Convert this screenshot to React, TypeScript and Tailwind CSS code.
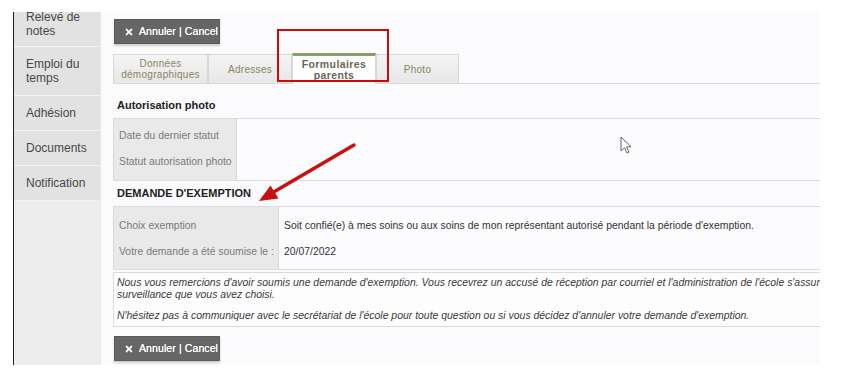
import React from "react";
import { FaTimes } from "react-icons/fa";

const menu = [
  { label: ["Relevé de", "notes"], first: true },
  { label: ["Emploi du", "temps"] },
  { label: ["Adhésion"] },
  { label: ["Documents"] },
  { label: ["Notification"] },
];

const tabs = [
  { label: ["Données", "démographiques"], w: "w-[95px]" },
  { label: ["Adresses"], w: "w-[84px]" },
  { label: ["Formulaires", "parents"], w: "w-[84px]", active: true },
  { label: ["Photo"], w: "w-[83px]" },
];

function CancelButton() {
  return (
    <button className="flex h-[25px] w-[106px] items-center gap-[5px] border border-[#5a5a5a] bg-[#666666] pl-[9px] text-[10.5px] font-bold text-white shadow-[0_2px_2px_rgba(0,0,0,0.18)]">
      <FaTimes className="h-[10px] w-[10px]" />
      <span className="font-normal tracking-[0.1px] [text-shadow:0_0_0.4px_#fff]">Annuler | Cancel</span>
    </button>
  );
}

function InfoTable({ labelWidth, rows, padTop, padBottom }: {
  labelWidth: string;
  rows: { label: string; value?: string }[];
  padTop: string;
  padBottom: string;
}) {
  return (
    <div className="flex w-[1000px] border-y border-[#dcdcdc]">
      <div className={`${labelWidth} shrink-0 border-x border-[#d8d8d8] bg-[#e9e9e9] ${padTop} ${padBottom}`}>
        {rows.map((r) => (
          <div key={r.label} className="flex h-[26px] items-center whitespace-nowrap pl-[5px] text-[10.4px] text-[#7a7a7a]">
            {r.label}
          </div>
        ))}
      </div>
      <div className={`flex-1 bg-[#fcfbfd] ${padTop} ${padBottom}`}>
        {rows.map((r) => (
          <div key={r.label} className="flex h-[26px] items-center whitespace-nowrap pl-[5px] text-[10.4px] text-[#333]">
            {r.value ?? ""}
          </div>
        ))}
      </div>
    </div>
  );
}

export default function App() {
  return (
    <div className="relative h-[371px] w-[855px] overflow-hidden bg-white font-['Liberation_Sans',Arial,sans-serif]">
      <div className="mt-3 flex h-[353px] w-[820px] overflow-hidden">
        {/* sidebar */}
        <aside className="ml-[13px] flex w-[87px] shrink-0 flex-col overflow-hidden border-l border-[#1e1e1e] bg-[#ededed]">
          {menu.map((m) => (
            <div
              key={m.label[0]}
              className={`border-b border-[#f3f3f3] bg-[#e2e2e2] pl-3 text-[12px] leading-[14px] text-[#474747] ${
                m.first ? "-mt-[12px] pt-[10px] pb-[8px]" : "py-[10px]"
              }`}
            >
              {m.label.map((l) => (
                <div key={l}>{l}</div>
              ))}
            </div>
          ))}
        </aside>

        {/* main */}
        <main className="flex-1 overflow-hidden border-l border-[#e6e6e6] bg-[#fbfafc] pl-[12px]">
          <div className="pt-[7px] pl-px">
            <CancelButton />
          </div>

          {/* tabs */}
          <div className="mt-[10px] flex h-[30px] w-[1000px] items-end border-b border-[#dadada]">
            {tabs.map((t) =>
              t.active ? (
                <div
                  key={t.label[0]}
                  className={`${t.w} relative -mb-px flex h-[31px] flex-col items-center border-t-[3px] border-x border-[#d8d8d8] border-t-[#86a069] bg-white pt-[3px] text-[10.5px] font-bold leading-[11px] tracking-[0.4px] text-[#6b6650]`}
                >
                  {t.label.map((l) => (
                    <span key={l}>{l}</span>
                  ))}
                </div>
              ) : (
                <div
                  key={t.label[0]}
                  className={`${t.w} flex h-[29px] flex-col items-center justify-center border border-b-0 border-[#d8d8d8] bg-gradient-to-b from-[#f4f4f4] to-[#e7e7e7] text-[10px] leading-[11px] tracking-[0.3px] text-[#8a8462]`}
                >
                  {t.label.map((l) => (
                    <span key={l}>{l}</span>
                  ))}
                </div>
              )
            )}
          </div>

          <h3 className="flex h-[34px] items-center pl-1 pt-[9px] text-[11px] font-bold text-[#222]">
            Autorisation photo
          </h3>
          <InfoTable
            labelWidth="w-[124px]"
            padTop="pt-[4px]"
            padBottom="pb-[5px]"
            rows={[{ label: "Date du dernier statut" }, { label: "Statut autorisation photo" }]}
          />

          <h3 className="flex h-[25px] items-center pl-1 text-[11px] font-bold uppercase text-[#222]">
            DEMANDE D'EXEMPTION
          </h3>
          <InfoTable
            labelWidth="w-[166px]"
            padTop="pt-[6px]"
            padBottom="pb-[4px]"
            rows={[
              {
                label: "Choix exemption",
                value:
                  "Soit confié(e) à mes soins ou aux soins de mon représentant autorisé pendant la période d'exemption.",
              },
              { label: "Votre demande a été soumise le :", value: "20/07/2022" },
            ]}
          />

          <div className="mt-[2px] w-[1000px] border border-[#dcdcdc] bg-[#fdfdfe] pb-[4px] pl-[3px] pt-[4px] text-[10.45px] italic leading-[12px] text-[#3a3a3a]">
            <p className="whitespace-nowrap">
              Nous vous remercions d'avoir soumis une demande d'exemption. Vous recevrez un accusé de réception par courriel et l'administration de l'école s'assurera que votre enfant sera placé sous le mode de
              <br />
              surveillance que vous avez choisi.
            </p>
            <p className="mt-[9px] whitespace-nowrap">
              N'hésitez pas à communiquer avec le secrétariat de l'école pour toute question ou si vous décidez d'annuler votre demande d'exemption.
            </p>
          </div>

          <div className="mt-[9px] pl-px">
            <CancelButton />
          </div>
        </main>
      </div>

      {/* annotations over the screenshot */}
      <div className="absolute left-[277px] top-[29px] h-[53px] w-[112px] border-2 border-[#cc0a0a]" />
      <svg className="absolute left-0 top-0" width="855" height="371" viewBox="0 0 855 371">
        <line x1="354" y1="145" x2="272" y2="193" stroke="#c8100f" strokeWidth="3.5" strokeLinecap="round" />
        <polygon points="259,201 270.5,185.5 278.5,198.5" fill="#c8100f" />
        <path
          d="M621 137 L621 151 L624.5 147.8 L627 153 L629 152 L626.6 147 L631 146.6 Z"
          fill="#fff"
          stroke="#555"
          strokeWidth="0.9"
          strokeLinejoin="round"
        />
      </svg>
    </div>
  );
}
